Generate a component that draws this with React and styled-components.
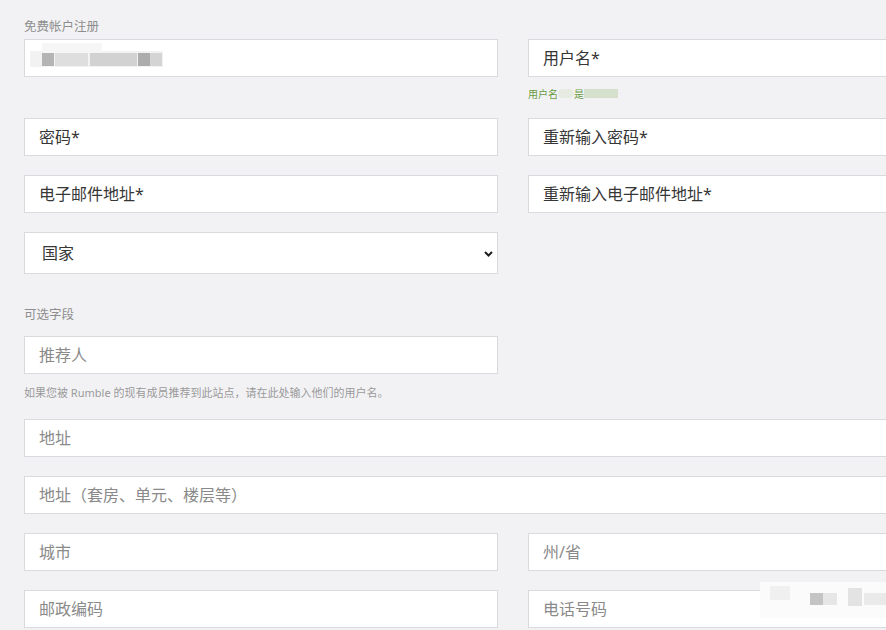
import React from 'react'
import styled, { createGlobalStyle } from 'styled-components'

const GlobalStyle = createGlobalStyle`
  body {
    margin: 0;
    background: #f2f2f5;
    overflow: hidden;
    font-family: "Noto Sans", "Noto Sans CJK SC", sans-serif;
  }
`

const Page = styled.div`
    width: 978px;
    padding: 19px 0 0 24px;
`

const SectionLabel = styled.div`
    font-size: 12.5px;
    line-height: 16px;
    color: #8e8e8e;
    margin-top: ${p => p.$top || 0}px;
    margin-bottom: ${p => p.$bottom || 4}px;
`

const Grid = styled.div`
    display: grid;
    grid-template-columns: 474px 474px;
    column-gap: 30px;
    row-gap: 19px;
`

const Field = styled.div`
    position: relative;
    width: ${p => p.$narrow ? '474px' : 'auto'};
    grid-column: ${p => p.$wide ? '1 / -1' : 'auto'};
`

const Input = styled.input`
    display: block;
    box-sizing: border-box;
    width: 100%;
    height: 38px;
    padding: 0 14px;
    border: 1px solid #d9d9de;
    border-radius: 0;
    background: #fff;
    font-family: inherit;
    font-size: 16px;
    color: #363636;
    outline: none;

    &::placeholder {
        color: ${p => p.$muted ? '#8a8a8a' : '#363636'};
        opacity: 1;
    }
`

const Select = styled.select`
    display: block;
    box-sizing: border-box;
    width: 100%;
    height: 42px;
    padding: 0 30px 0 17px;
    border: 1px solid #d9d9de;
    border-radius: 0;
    background: #fff;
    font-family: inherit;
    font-size: 16px;
    color: #363636;
    outline: none;
    appearance: none;
`

const Chevron = styled.svg`
    position: absolute;
    right: 5px;
    top: 19px;
    pointer-events: none;
`

const Mosaic = styled.svg`
    position: absolute;
    left: ${p => p.$left}px;
    top: ${p => p.$top}px;
    pointer-events: none;
`

const UsernameHint = styled.div`
    box-sizing: border-box;
    height: 22px;
    padding-top: 11px;
    font-size: 10px;
    line-height: 12px;
    color: #6a9a43;
    display: flex;
    align-items: center;
`

const Smudge = styled.span`
    display: inline-block;
    width: ${p => p.$w}px;
    height: 9px;
    border-radius: ${p => p.$round ? '6px' : '0'};
    background: ${p => p.$bg};
`

const Hint = styled.div`
    font-size: 11px;
    line-height: 14px;
    color: #9a9a9a;
    margin: 12px 0 19px;
`

export default function App() {
    return (
        <>
            <GlobalStyle />
            <Page>
                <SectionLabel>免费帐户注册</SectionLabel>
                <Grid>
                    <Field>
                        <Input />
                        <Mosaic $left={6} $top={4} width="140" height="26">
                            <rect x="0" y="8" width="133" height="16" fill="#f2f2f2" />
                            <rect x="12" y="0" width="60" height="10" fill="#f6f6f6" />
                            <rect x="12" y="10" width="12" height="13" fill="#b4b4b4" />
                            <rect x="25" y="10" width="33" height="13" fill="#dedede" />
                            <rect x="60" y="10" width="47" height="13" fill="#d2d2d2" />
                            <rect x="108" y="10" width="12" height="13" fill="#acacac" />
                            <rect x="120" y="10" width="12" height="13" fill="#d4d4d4" />
                        </Mosaic>
                    </Field>
                    <Field>
                        <Input placeholder="用户名*" />
                        <UsernameHint>
                            用户名
                            <Smudge $w={16} $round $bg="#e6ebe2" />
                            是
                            <Smudge $w={34} $bg="#d5e0cd" />
                        </UsernameHint>
                    </Field>

                    <Field><Input type="password" placeholder="密码*" /></Field>
                    <Field><Input type="password" placeholder="重新输入密码*" /></Field>

                    <Field><Input placeholder="电子邮件地址*" /></Field>
                    <Field><Input placeholder="重新输入电子邮件地址*" /></Field>

                    <Field>
                        <Select defaultValue="">
                            <option value="">国家</option>
                        </Select>
                        <Chevron width="9" height="6" viewBox="0 0 9 6">
                            <polyline points="1,1 4.5,4.5 8,1" fill="none" stroke="#1e1e1e" strokeWidth="2" />
                        </Chevron>
                    </Field>
                </Grid>

                <SectionLabel $top={33} $bottom={13}>可选字段</SectionLabel>
                <Field $narrow>
                    <Input $muted placeholder="推荐人" />
                </Field>
                <Hint>如果您被 Rumble 的现有成员推荐到此站点，请在此处输入他们的用户名。</Hint>

                <Grid>
                    <Field $wide><Input $muted placeholder="地址" /></Field>
                    <Field $wide><Input $muted placeholder="地址（套房、单元、楼层等）" /></Field>
                    <Field><Input $muted placeholder="城市" /></Field>
                    <Field><Input $muted placeholder="州/省" /></Field>
                    <Field><Input $muted placeholder="邮政编码" /></Field>
                    <Field>
                        <Input $muted placeholder="电话号码" />
                        <Mosaic $left={232} $top={-12} width="130" height="44">
                            <rect x="0" y="4" width="126" height="36" fill="#fbfbfb" />
                            <rect x="10" y="8" width="20" height="14" fill="#f0f0f0" />
                            <rect x="50" y="15" width="13" height="12" fill="#c4c4c4" />
                            <rect x="63" y="15" width="14" height="12" fill="#e6e6e6" />
                            <rect x="88" y="10" width="14" height="18" fill="#e3e3e3" />
                            <rect x="104" y="15" width="22" height="12" fill="#eaeaea" />
                        </Mosaic>
                    </Field>
                </Grid>
            </Page>
        </>
    )
}
